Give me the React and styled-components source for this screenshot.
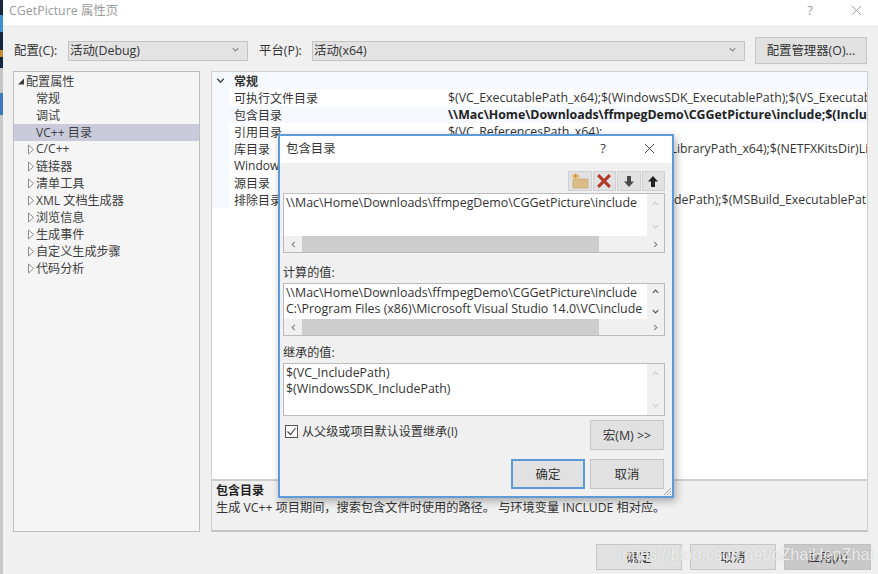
import React from "react";
import styled, { createGlobalStyle } from "styled-components";

const Global = createGlobalStyle`
  html, body { margin: 0; padding: 0; width: 878px; height: 574px; overflow: hidden; background: #f0f0f0; }
  * { box-sizing: border-box; }
  body { font-family: "Noto Sans CJK SC", "Noto Sans", sans-serif; font-size: 13px; color: #333; }
`;
const FONT = `"Open Sans", "Noto Sans CJK SC", sans-serif`;

const Screen = styled.div`
  position: relative; width: 878px; height: 574px; display: flex; overflow: hidden;
  font-family: ${FONT}; font-size: 12.4px; color: #3a3a3a;
`;
const Desktop = styled.div`
  width: 3px; flex: none;
  background: linear-gradient(#16263f 0, #16263f 15px, #3f8fd0 15px, #3f8fd0 32px, #16263f 32px, #16263f 50px, #c98a35 50px, #c98a35 57px, #16263f 57px, #16263f 68px, #c4c4c4 68px, #c4c4c4 93px, #3a78c0 93px, #3a78c0 115px, #c9c9c9 115px, #c9c9c9 574px);
`;
const Win = styled.div`flex: 1; display: flex; flex-direction: column; background: #f0f0f0; min-width: 0;`;
const TitleBar = styled.div`
  height: 25px; background: #fff; display: flex; align-items: center; padding: 0 12px 5px 6px; flex: none;
`;
const TitleText = styled.div`flex: 1; font-size: 12.4px; color: ${p => p.$c || "#9a9a9a"};`;
const TitleGlyph = styled.div`
  color: ${p => p.$c}; font-size: 13px; width: 20px; display: flex; justify-content: center; margin-left: ${p => p.$gap}px;
`;
const Body = styled.div`flex: 1; display: flex; flex-direction: column; padding: 12px 10px 4px 10px; min-height: 0;`;
const ConfigRow = styled.div`display: flex; align-items: center; height: 27px; flex: none;`;
const ConfigLabel = styled.div`width: ${p => p.$w}px; margin-left: ${p => p.$ml || 0}px; padding: 0 0 2px 1px; color: #333;`;
const Select = styled.div`
  width: ${p => p.$w}px; height: 20px; background: #e3e3e3; border: 1px solid #c4c4c4; color: #333;
  display: flex; align-items: center; justify-content: space-between; padding: 0 7px 2px 1px;
`;
const Btn = styled.div`
  width: ${p => p.$w}px; height: ${p => p.$h}px; flex: none; margin-left: ${p => p.$ml || 0}px; margin-right: ${p => p.$mr || 0}px;
  background: ${p => p.$off ? "#c9c9c9" : "#e1e1e1"};
  border: ${p => p.$def ? "2px solid #5b9ad6" : `1px solid ${p.$off ? "#c0c0c0" : "#c6c6c6"}`};
  display: flex; align-items: center; justify-content: center; color: #333; font-size: 12.4px; padding-bottom: 1px;
`;
const Panels = styled.div`display: flex; gap: 11px; margin-top: 7px; height: 461px; flex: none;`;
const Tree = styled.div`
  width: 187px; flex: none; background: #f5f5f5; border: 1px solid #bdbdbd; padding-top: 1px;
`;
const TreeRow = styled.div`
  height: 17px; display: flex; align-items: center; white-space: nowrap; color: #3f3f3f; font-size: 12.1px;
  padding: 0 0 2px ${p => p.$indent}px; background: ${p => p.$sel ? "#c9cbda" : "transparent"};
`;
const Caret = styled.svg`width: 9px; height: 11px; flex: none; margin: 2px 0 0;`;
const Right = styled.div`flex: 1; display: flex; flex-direction: column; min-width: 0;`;
const Grid = styled.div`flex: 1; background: #fff; border: 1px solid #cfcfcf; overflow: hidden; height: 409px;`;
const SectionRow = styled.div`
  height: 17px; background: #f5f8fd; display: flex; align-items: center; font-weight: 700; color: #333; font-size: 12px;
`;
const Gutter = styled.div`width: 17px; flex: none; align-self: stretch; background: #f5f8fd; display: flex; align-items: center; justify-content: center;`;
const PropRow = styled.div`
  height: 17px; display: flex; align-items: center; white-space: nowrap; overflow: hidden;
  background: ${p => p.$hi ? "#f5f8fd" : "#fff"};
`;
const PropName = styled.div`width: 219px; flex: none; padding-left: 5px; color: #333; font-size: 12px;`;
const PropValue = styled.div`flex: 1; font-weight: ${p => p.$b ? 700 : 400}; color: ${p => p.$b ? "#222" : "#333"}; overflow: hidden; font-size: 12.35px;`;
const Desc = styled.div`
  height: 52px; background: #f0f0f0; border: 1px solid #cdcdcd; border-bottom: 2px solid #c4c4c4; padding: 1px 4px; line-height: 17px; color: #333; font-size: 12.2px;
`;
const DescTitle = styled.div`font-weight: 700; color: #222; font-size: 12px;`;
const Footer = styled.div`display: flex; justify-content: flex-end; gap: 8px; margin-top: 12px; margin-right: -3px;`;

const Dialog = styled.div`
  position: absolute; left: 278px; top: 134px; width: 396px; height: 364px; background: #f0f0f0;
  border: 2px solid #5a9bd8; box-shadow: 2px 3px 8px rgba(0,0,0,.3); display: flex; flex-direction: column;
`;
const DlgTitle = styled.div`
  height: 27px; background: #fff; flex: none; display: flex; align-items: center; padding: 0 13px 3px 6px; font-size: 12.4px; color: #333;
`;
const DlgContent = styled.div`flex: 1; display: flex; flex-direction: column; padding: 8px 7px 0 3px; position: relative;`;
const Tools = styled.div`display: flex; justify-content: flex-end; gap: 1px; height: 20px;`;
const ToolBtn = styled.div`
  width: 23.5px; height: 20px; background: #e1e1e1; border: 1px solid #d0d0d0; display: flex; align-items: center; justify-content: center;
`;
const ListBox = styled.div`
  height: ${p => p.$h}px; margin-top: ${p => p.$mt || 0}px; border: 1px solid #bcbcbc; background: #f0f0f0; position: relative; display: grid;
  grid-template-columns: minmax(0, 1fr) 17px; grid-template-rows: minmax(0, 1fr) ${p => p.$noH ? "0" : "16px"}; flex: none;
`;
const ListText = styled.div`grid-column: 1; grid-row: 1; background: #fff; padding: 1px 2px 0; line-height: 16px; white-space: nowrap; overflow: hidden; color: #333; font-size: 12.4px;`;
const VBar = styled.div`
  grid-column: 2; grid-row: 1; background: #f0f0f0; display: flex; flex-direction: column; justify-content: space-between; align-items: center; padding: ${p => p.$pad}px 0;
`;
const HBar = styled.div`grid-column: 1 / span 2; grid-row: 2; display: flex; align-items: stretch; background: #f0f0f0;`;
const HCap = styled.div`width: 18px; flex: none; display: flex; align-items: center; justify-content: center;`;
const HThumb = styled.div`width: 297px; background: #cdcdcd; flex: none;`;
const HRest = styled.div`flex: 1;`;
const FieldLabel = styled.div`margin-top: ${p => p.$mt}px; height: 17px; line-height: 17px; color: #333; font-size: 12.1px;`;
const CheckRow = styled.div`display: flex; align-items: flex-start; margin-top: 4px; height: 39px;`;
const CheckBox = styled.div`
  width: 13px; height: 13px; margin: 5px 4px 0 2px; background: #fff; border: 1px solid #555; display: flex; align-items: center; justify-content: center; flex: none;
`;
const CheckText = styled.div`flex: 1; line-height: 17px; margin-top: 3px; color: #333; font-size: 12.1px;`;
const DlgFooter = styled.div`display: flex; justify-content: flex-end; gap: 5px; margin-right: 1px;`;
const Grip = styled.svg`position: absolute; right: 0; bottom: 0; width: 10px; height: 10px;`;
const Watermark = styled.div`
  position: absolute; left: 622px; top: 545px; font-family: "Liberation Sans", sans-serif; font-size: 16.2px; color: rgba(255,255,255,.8);
  text-shadow: 0 0 1px rgba(150,150,150,.7); white-space: nowrap;
`;

const Chev = ({ d, c = "#888", s = 9 }) => (
  <svg width={s} height={s} viewBox="0 0 10 10" fill="none" stroke={c} strokeWidth="1.3">
    <path d={{ down: "M2 3.5 5 6.5 8 3.5", up: "M2 6.5 5 3.5 8 6.5", left: "M6.5 2 3.5 5 6.5 8", right: "M3.5 2 6.5 5 3.5 8" }[d]} />
  </svg>
);
const Closed = () => (
  <Caret viewBox="0 0 9 11"><path d="M1.5 1 6.5 5.5 1.5 10Z" fill="#fff" stroke="#8a8a8a" /></Caret>
);
const Open = () => (
  <Caret viewBox="0 0 9 11"><path d="M7 2.5V8.5H1Z" fill="#3c3c3c" /></Caret>
);
const X = ({ c, s = 11, w = 1 }) => (
  <svg width={s} height={s} viewBox="0 0 12 12" stroke={c} strokeWidth={w} fill="none"><path d="M1 1 11 11M11 1 1 11" /></svg>
);

const tree = [
  ["配置属性", 0, "open"], ["常规", 1], ["调试", 1], ["VC++ 目录", 1, null, true],
  ["C/C++", 2, "c"], ["链接器", 2, "c"], ["清单工具", 2, "c"], ["XML 文档生成器", 2, "c"],
  ["浏览信息", 2, "c"], ["生成事件", 2, "c"], ["自定义生成步骤", 2, "c"], ["代码分析", 2, "c"],
];
const props = [
  ["可执行文件目录", "$(VC_ExecutablePath_x64);$(WindowsSDK_ExecutablePath);$(VS_ExecutablePath);$(MSBuild_ExecutablePath);$(PATH)"],
  ["包含目录", "\\\\Mac\\Home\\Downloads\\ffmpegDemo\\CGGetPicture\\include;$(IncludePath)", true],
  ["引用目录", "$(VC_ReferencesPath_x64);"],
  ["库目录", "$(VC_LibraryPath_x64);$(WindowsSDK_LibraryPath_x64);$(NETFXKitsDir)Lib\\um\\x64"],
  ["Windows", ""],
  ["源目录", ""],
  ["排除目录", "$(VC_IncludePath);$(WindowsSDK_IncludePath);$(MSBuild_ExecutablePath);$(MSBuild_ExecutablePath)"],
];

const Folder = () => (
  <svg width="19" height="16" viewBox="0 0 19 16">
    <path d="M3 6H18V15H3Z" fill="#dcbc86" stroke="#c9a873" strokeWidth=".7" />
    <path d="M3 6 5 4H11L12 6Z" fill="#e8cf9f" />
    <path d="M2 3H9M5.5 0.5V5.5M3.5 1.5 7.5 4.5M7.5 1.5 3.5 4.5" stroke="#d9962f" strokeWidth="1" />
  </svg>
);
const ArrowSvg = styled.svg`transform: ${p => p.$up ? "none" : "rotate(180deg)"};`;
const Arrow = ({ up, c }) => (
  <ArrowSvg $up={up} width="12" height="13" viewBox="0 0 12 13">
    <path d="M6 1 11 6.5H8V12H4V6.5H1Z" fill={c} />
  </ArrowSvg>
);
const HScroll = () => (
  <HBar>
    <HCap><Chev d="left" /></HCap>
    <HThumb />
    <HRest />
    <HCap><Chev d="right" /></HCap>
  </HBar>
);

export default function App() {
  return (
    <Screen>
      <Global />
      <Desktop />
      <Win>
        <TitleBar>
          <TitleText>CGetPicture 属性页</TitleText>
          <TitleGlyph $c="#999" $gap={0}>?</TitleGlyph>
          <TitleGlyph $c="#999" $gap={26}><X c="#9a9a9a" /></TitleGlyph>
        </TitleBar>
        <Body>
          <ConfigRow>
            <ConfigLabel $w={55}>配置(C):</ConfigLabel>
            <Select $w={180}>活动(Debug)<Chev d="down" /></Select>
            <ConfigLabel $w={54} $ml={10}>平台(P):</ConfigLabel>
            <Select $w={433}>活动(x64)<Chev d="down" /></Select>
            <Btn $w={112} $h={27} $ml={10}>配置管理器(O)...</Btn>
          </ConfigRow>
          <Panels>
            <Tree>
              {tree.map(([t, lvl, kind, sel]) => (
                <TreeRow key={t} $indent={lvl === 0 ? 3 : lvl === 1 ? 22 : 13} $sel={sel}>
                  {kind === "open" && <Open />}
                  {kind === "c" && <Closed />}
                  {t}
                </TreeRow>
              ))}
            </Tree>
            <Right>
              <Grid>
                <SectionRow>
                  <Gutter><Chev d="down" c="#444" s={11} /></Gutter>
                  <PropName>常规</PropName>
                </SectionRow>
                {props.map(([n, v, b]) => (
                  <PropRow key={n} $hi={b}>
                    <Gutter />
                    <PropName>{n}</PropName>
                    <PropValue $b={b}>{v}</PropValue>
                  </PropRow>
                ))}
              </Grid>
              <Desc>
                <DescTitle>包含目录</DescTitle>
                <div>生成 VC++ 项目期间，搜索包含文件时使用的路径。 与环境变量 INCLUDE 相对应。</div>
              </Desc>
            </Right>
          </Panels>
          <Footer>
            <Btn $w={86} $h={26}>确定</Btn>
            <Btn $w={86} $h={26}>取消</Btn>
            <Btn $w={87} $h={26} $off>应用(A)</Btn>
          </Footer>
        </Body>
      </Win>
      <Dialog>
        <DlgTitle>
          <TitleText $c="#333">包含目录</TitleText>
          <TitleGlyph $c="#333" $gap={0}>?</TitleGlyph>
          <TitleGlyph $c="#333" $gap={26}><X c="#333" /></TitleGlyph>
        </DlgTitle>
        <DlgContent>
          <Tools>
            <ToolBtn><Folder /></ToolBtn>
            <ToolBtn><X c="#b03a2a" s={14} w={2.6} /></ToolBtn>
            <ToolBtn><Arrow c="#4a4a4a" /></ToolBtn>
            <ToolBtn><Arrow up c="#222" /></ToolBtn>
          </Tools>
          <ListBox $h={60} $mt={2}>
            <ListText>\\Mac\Home\Downloads\ffmpegDemo\CGGetPicture\include</ListText>
            <VBar $pad={5}><Chev d="up" c="#ccc" /><Chev d="down" c="#ccc" /></VBar>
            <HScroll />
          </ListBox>
          <FieldLabel $mt={11}>计算的值:</FieldLabel>
          <ListBox $h={53} $mt={2}>
            <ListText>{"\\\\Mac\\Home\\Downloads\\ffmpegDemo\\CGGetPicture\\include"}<br />{"C:\\Program Files (x86)\\Microsoft Visual Studio 14.0\\VC\\include"}</ListText>
            <VBar $pad={3}><Chev d="up" c="#555" /><Chev d="down" c="#555" /></VBar>
            <HScroll />
          </ListBox>
          <FieldLabel $mt={8}>继承的值:</FieldLabel>
          <ListBox $h={53} $mt={2} $noH>
            <ListText>$(VC_IncludePath)<br />$(WindowsSDK_IncludePath)</ListText>
            <VBar $pad={5}><Chev d="up" c="#ccc" /><Chev d="down" c="#ccc" /></VBar>
          </ListBox>
          <CheckRow>
            <CheckBox>
              <svg width="11" height="11" viewBox="0 0 11 11" fill="none" stroke="#444" strokeWidth="1.2"><path d="M1.5 5.5 4.5 8.5 9.5 2" /></svg>
            </CheckBox>
            <CheckText>从父级或项目默认设置继承(I)</CheckText>
            <Btn $w={74} $h={30} $mr={1}>宏(M) &gt;&gt;</Btn>
          </CheckRow>
          <DlgFooter>
            <Btn $w={74} $h={30} $def>确定</Btn>
            <Btn $w={74} $h={30}>取消</Btn>
          </DlgFooter>
          <Grip viewBox="0 0 10 10" stroke="#aaa" strokeWidth="1"><path d="M9 2 2 9M9 5 5 9M9 8 8 9" /></Grip>
        </DlgContent>
      </Dialog>
      <Watermark>https://blog.csdn.net/oZhaiHenZhai</Watermark>
    </Screen>
  );
}
